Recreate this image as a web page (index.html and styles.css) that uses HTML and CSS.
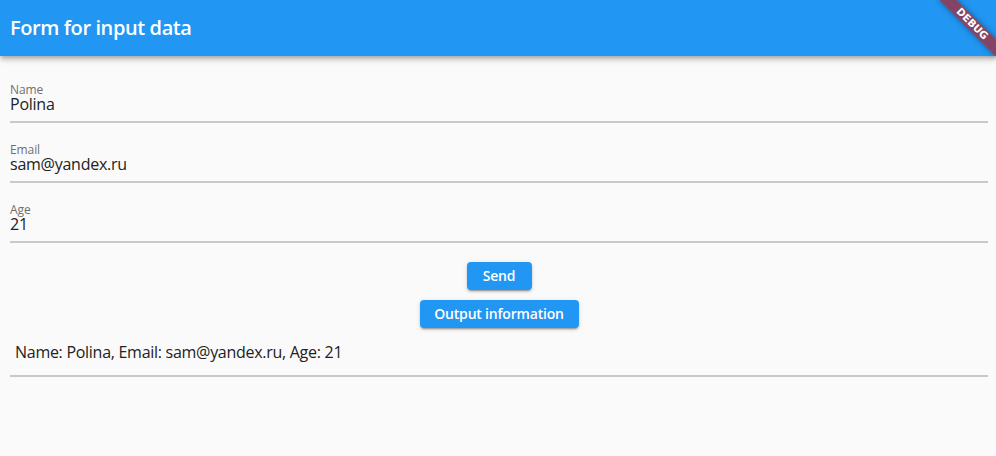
FILE: index.html
```html
<!DOCTYPE html>
<html lang="en">
<head>
<meta charset="utf-8">
<title>Form for input data</title>
<link rel="stylesheet" href="styles.css">
</head>
<body>
<header class="appbar">
  <h1 class="appbar-title">Form for input data</h1>
</header>
<main class="content">
  <div class="field">
    <span class="field-label">Name</span>
    <span class="field-value">Polina</span>
  </div>
  <div class="field">
    <span class="field-label">Email</span>
    <span class="field-value">sam@yandex.ru</span>
  </div>
  <div class="field">
    <span class="field-label">Age</span>
    <span class="field-value">21</span>
  </div>
  <div class="actions">
    <button class="btn btn-send">Send</button>
    <button class="btn btn-output">Output information</button>
  </div>
  <div class="result">Name: Polina, Email: sam@yandex.ru, Age: 21</div>
</main>
<div class="debug-banner">DEBUG</div>
</body>
</html>
```
FILE: styles.css
```css
html, body {
  margin: 0;
  padding: 0;
}
body {
  width: 996px;
  height: 456px;
  overflow: hidden;
  position: relative;
  background: #fafafa;
  font-family: "Open Sans", "Noto Sans", sans-serif;
  color: rgba(0, 0, 0, 0.87);
}
.appbar {
  height: 56px;
  background: #2196f3;
  display: flex;
  align-items: center;
  padding-left: 10px;
  box-sizing: border-box;
  box-shadow: 0 2px 4px -1px rgba(0,0,0,.2), 0 4px 5px 0 rgba(0,0,0,.14), 0 1px 10px 0 rgba(0,0,0,.12);
  position: relative;
  z-index: 1;
}
.appbar-title {
  margin: 0;
  font-size: 20px;
  font-weight: 600;
  letter-spacing: -0.4px;
  color: #fff;
  line-height: 24px;
}
.content {
  padding: 7px 8px 0 10px;
}
.field {
  height: 60px;
  box-sizing: border-box;
  display: flex;
  flex-direction: column;
  justify-content: flex-end;
  padding-bottom: 9px;
  border-bottom: 2px solid #c8c8c8;
}
.field-label {
  font-size: 12px;
  line-height: 12px;
  letter-spacing: -0.1px;
  color: #6f6f6f;
}
.field-value {
  font-size: 16px;
  line-height: 16px;
  letter-spacing: -0.25px;
  color: #222;
}
.actions {
  margin-top: 19px;
  display: flex;
  flex-direction: column;
  align-items: center;
  gap: 10px;
}
.btn {
  height: 28px;
  border: 0;
  border-radius: 4px;
  background: #2196f3;
  color: #fff;
  font-family: inherit;
  font-size: 14px;
  font-weight: 600;
  letter-spacing: -0.2px;
  line-height: 28px;
  padding: 0;
  box-shadow: 0 3px 1px -2px rgba(0,0,0,.2), 0 2px 2px 0 rgba(0,0,0,.14), 0 1px 5px 0 rgba(0,0,0,.12);
}
.btn-send {
  width: 65px;
}
.btn-output {
  width: 159px;
}
.result {
  margin-top: 14px;
  padding: 0 0 13px 5px;
  font-size: 16px;
  line-height: 20px;
  letter-spacing: -0.28px;
  color: #222;
  border-bottom: 2px solid #c8c8c8;
}
.debug-banner {
  position: absolute;
  left: 932px;
  top: 18px;
  width: 80px;
  height: 12px;
  transform: rotate(45deg);
  background: rgba(183, 28, 28, 0.66);
  box-shadow: 0 0 6px rgba(0,0,0,.4);
  color: #fff;
  font-family: "DejaVu Sans", sans-serif;
  font-weight: 700;
  font-size: 10.2px;
  line-height: 12px;
  text-align: center;
  z-index: 2;
}
```
